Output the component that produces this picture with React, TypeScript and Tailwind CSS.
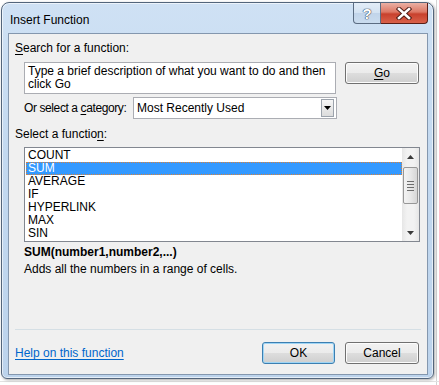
import React from 'react';

const functions = ['COUNT', 'SUM', 'AVERAGE', 'IF', 'HYPERLINK', 'MAX', 'SIN'];

const WinButton: React.FC<{ children: React.ReactNode; focused?: boolean; className?: string }> = ({ children, focused, className }) => (
    <div
        className={`h-[22px] flex items-center justify-center rounded-[3px] border ${
            focused ? 'border-[#3c7fb1] shadow-[inset_0_0_0_1px_#9fd5f5]' : 'border-[#707070] shadow-[inset_0_0_0_1px_#fcfcfc]'
        } bg-[linear-gradient(to_bottom,#f2f2f2_0%,#ebebeb_50%,#dddddd_51%,#cfcfcf_100%)] ${className ?? ''}`}
    >
        {children}
    </div>
);

const App: React.FC = () => {
    return (
        <div className="w-[439px] h-[385px] bg-white relative overflow-hidden font-['Segoe_UI','Liberation_Sans',sans-serif] text-[12px] text-black">
            {/* sheet grid behind the dialog */}
            <div className="absolute left-[436px] top-0 h-full w-px bg-[#d4d4d4]" />
            <div className="absolute left-0 top-[381px] w-full h-px bg-[#e2e2e2]" />

            <div className="relative ml-[1px] mt-[2px] w-[433px] h-[377px] flex flex-col rounded-t-[8px] rounded-b-[6px] border border-[#53657b] bg-[linear-gradient(to_bottom,#cfe1f4_0%,#c3d9f0_40%,#bcd3ec_100%)] shadow-[1px_1px_3px_rgba(0,0,0,0.35),inset_0_0_0_1px_rgba(255,255,255,0.6)]">
                {/* title bar */}
                <div className="h-[30px] flex items-start">
                    <div className="pl-[8px] pt-[10px] text-[12px] leading-[15px] text-black">Insert Function</div>
                    <div className="ml-auto mr-[5px] flex">
                        <div className="w-[28px] h-[21px] flex items-center justify-center rounded-bl-[4px] border border-t-0 border-[#5b6c82] bg-[linear-gradient(to_bottom,#e3edf8_0%,#d3e2f2_50%,#c1d4ea_51%,#cadcef_100%)]">
                            <span className="font-bold text-[15px] leading-none text-white [text-shadow:0_0_1px_#34445a,0_0_1px_#34445a,0_0_1px_#34445a]">?</span>
                        </div>
                        <div className="w-[47px] h-[21px] flex items-center justify-center rounded-br-[4px] border border-t-0 border-l-0 border-[#5a1e16] bg-[linear-gradient(to_bottom,#eab0a4_0%,#dd7865_45%,#c8412d_55%,#d9614a_100%)]">
                            <svg width="16" height="13" viewBox="0 0 16 13">
                                <path d="M3 2 L13 11 M13 2 L3 11" stroke="#4b1a14" strokeWidth="4.4" strokeLinecap="square" />
                                <path d="M3 2 L13 11 M13 2 L3 11" stroke="#ffffff" strokeWidth="2.6" strokeLinecap="square" />
                            </svg>
                        </div>
                    </div>
                </div>

                {/* client area */}
                <div className="ml-[6px] mr-[5px] mb-[3px] flex-1 border border-[#8497ae] bg-[#f0f0f0] flex flex-col pl-[6px]">
                    <div className="mt-[7px] leading-[15px]">
                        <u className="underline-offset-2">S</u>earch for a function:
                    </div>

                    <div className="mt-[6px] flex items-start">
                        <div className="ml-[9px] w-[312px] h-[32px] border border-[#abadb3] bg-white pl-[3px] pt-[2px] leading-[13px]">
                            Type a brief description of what you want to do and then click Go
                        </div>
                        <WinButton className="ml-[9px] w-[74px]">
                            <span><u className="underline-offset-2">G</u>o</span>
                        </WinButton>
                    </div>

                    <div className="mt-[3px] ml-[9px] flex items-center h-[22px]">
                        <span className="w-[109px] shrink-0 whitespace-nowrap tracking-[-0.4px]">
                            Or select a <u className="underline-offset-2">c</u>ategory:
                        </span>
                        <div className="w-[204px] h-[22px] border border-[#abadb3] bg-white flex items-center pl-[3px] pr-[2px]">
                            <span className="flex-1">Most Recently Used</span>
                            <div className="w-[13px] h-[18px] border border-[#9ca3ac] bg-[linear-gradient(to_bottom,#f6f6f6,#dcdcdc)] flex items-center justify-center">
                                <svg width="7" height="4" viewBox="0 0 7 4">
                                    <path d="M0 0 H7 L3.5 4 Z" fill="#000" />
                                </svg>
                            </div>
                        </div>
                    </div>

                    <div className="mt-[8px] leading-[15px]">
                        Select a functio<u className="underline-offset-2">n</u>:
                    </div>

                    <div className="mt-[5px] ml-[9px] w-[396px] h-[95px] border border-[#828790] bg-white flex">
                        <div className="flex-1 pt-[1px] pl-[1px]">
                            {functions.map(name => (
                                <div
                                    key={name}
                                    className={`h-[13px] leading-[13px] pl-[2px] ${
                                        name === 'SUM' ? 'bg-[#3399ff] text-white outline-1 outline-dotted outline-[#d9823a] -outline-offset-1' : ''
                                    }`}
                                >
                                    {name}
                                </div>
                            ))}
                        </div>
                        {/* scrollbar */}
                        <div className="w-[17px] bg-[linear-gradient(to_right,#e6e6e6,#f2f2f2_30%,#f2f2f2_70%,#e6e6e6)] flex flex-col items-center">
                            <div className="h-[17px] w-full flex items-center justify-center">
                                <svg width="7" height="4" viewBox="0 0 7 4"><path d="M3.5 0 L7 4 H0 Z" fill="#3a3a3a" /></svg>
                            </div>
                            <div className="mt-[2px] w-[15px] h-[37px] rounded-[2px] border border-[#979797] bg-[linear-gradient(to_right,#f3f3f3,#e8e8e8_50%,#d6d6d6)] flex flex-col items-center justify-center gap-[2px]">
                                <div className="w-[7px] h-px bg-[#6d6d6d]" />
                                <div className="w-[7px] h-px bg-[#6d6d6d]" />
                                <div className="w-[7px] h-px bg-[#6d6d6d]" />
                                <div className="w-[7px] h-px bg-[#6d6d6d]" />
                            </div>
                            <div className="mt-auto h-[17px] w-full flex items-center justify-center">
                                <svg width="7" height="4" viewBox="0 0 7 4"><path d="M0 0 H7 L3.5 4 Z" fill="#3a3a3a" /></svg>
                            </div>
                        </div>
                    </div>

                    <div className="mt-[3px] ml-[9px] font-bold leading-[14px]">SUM(number1,number2,...)</div>
                    <div className="mt-[3px] ml-[9px] leading-[14px]">Adds all the numbers in a range of cells.</div>

                    <div className="mt-[53px] mr-[6px] h-px bg-[#d5dfe5]" />

                    <div className="mt-[12px] flex items-center">
                        <span className="text-[#0066cc] underline underline-offset-2">Help on this function</span>
                        <WinButton focused className="ml-auto w-[73px]">OK</WinButton>
                        <WinButton className="ml-[10px] mr-[8px] w-[74px]">Cancel</WinButton>
                    </div>
                </div>
            </div>
        </div>
    );
};

export default App;
